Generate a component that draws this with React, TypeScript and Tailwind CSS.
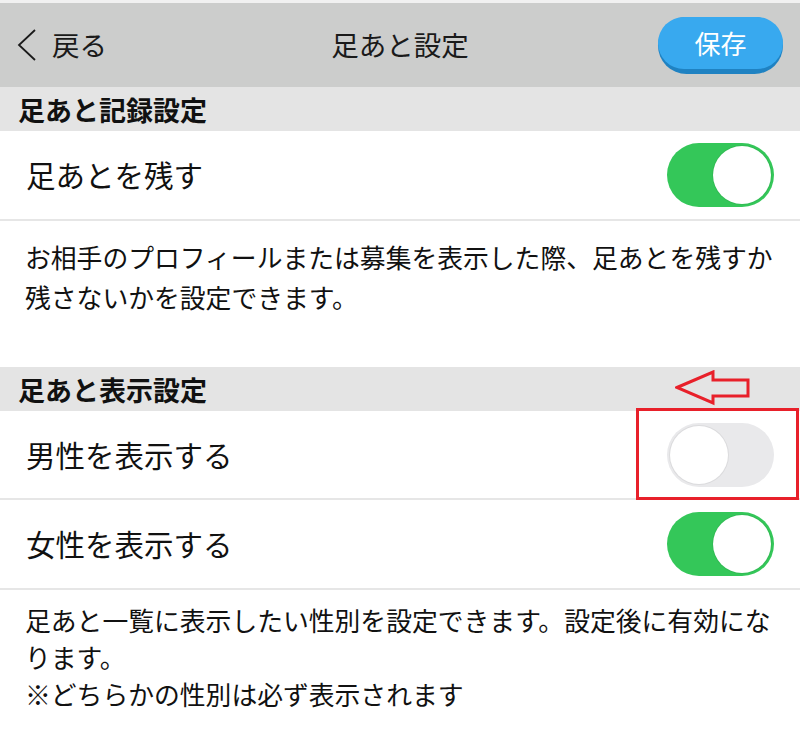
import React, { useState } from 'react';

const font = { fontFamily: '"Noto Sans CJK JP", "Noto Sans", sans-serif' };

const Toggle: React.FC<{ on: boolean; onClick: () => void }> = ({ on, onClick }) => (
  <button
    onClick={onClick}
    className={`relative h-[64px] w-[107px] rounded-full transition-colors ${on ? 'bg-[#34c759]' : 'bg-[#e9e9eb]'}`}
  >
    <span
      className={`absolute top-[3px] h-[58px] w-[58px] rounded-full bg-white shadow-[0_0_0_1px_rgba(0,0,0,0.06)] transition-all ${
        on ? 'left-[46px]' : 'left-[3px]'
      }`}
    />
  </button>
);

const SectionHeader: React.FC<{ title: string; children?: React.ReactNode }> = ({ title, children }) => (
  <div className="relative flex h-[44px] items-center bg-[#e4e4e4] pl-[18px]">
    <h2 className="text-[27px] font-bold leading-none text-[#111]">{title}</h2>
    {children}
  </div>
);

const Row: React.FC<{ label: string; on: boolean; onClick: () => void; height: string; children?: React.ReactNode }> = ({
  label,
  on,
  onClick,
  height,
  children,
}) => (
  <div className={`relative flex items-center justify-between border-b-2 border-[#e6e6e6] bg-white pl-[26px] pr-[26px] ${height}`}>
    <span className="text-[29.5px] leading-none text-[#111]">{label}</span>
    <Toggle on={on} onClick={onClick} />
    {children}
  </div>
);

export default function App() {
  const [leave, setLeave] = useState(true);
  const [male, setMale] = useState(false);
  const [female, setFemale] = useState(true);

  return (
    <div className="h-[730px] w-[800px] overflow-hidden bg-white" style={font}>
      <div className="h-[3px] bg-[#f1f1f1]" />
      <header className="grid h-[84px] grid-cols-[1fr_auto_1fr] items-center bg-[#cccdcc]">
        <button className="flex items-center gap-[15px] pl-[17px] text-[27.5px] text-[#1a1a1a]">
          <svg width="20" height="32" viewBox="0 0 20 32" fill="none">
            <path d="M18 1 L2 16 L18 31" stroke="#1a1a1a" strokeWidth="1.8" />
          </svg>
          <span className="leading-none">戻る</span>
        </button>
        <h1 className="text-[27.5px] font-normal leading-none text-[#1a1a1a]">足あと設定</h1>
        <div className="flex justify-end pr-[17px]">
          <button className="h-[57px] w-[125px] rounded-full bg-[#1f82c2] pb-[5px]">
            <span className="flex h-full w-full items-center justify-center rounded-full bg-[#38a9ef] text-[26px] leading-none text-white">
              保存
            </span>
          </button>
        </div>
      </header>

      <SectionHeader title="足あと記録設定" />
      <Row label="足あとを残す" on={leave} onClick={() => setLeave(!leave)} height="h-[90px]" />
      <p className="h-[146px] px-[25px] pt-[16px] text-[25.8px] leading-[40px] text-[#111]">
        お相手のプロフィールまたは募集を表示した際、足あとを残すか残さないかを設定できます。
      </p>

      <SectionHeader title="足あと表示設定">
        <svg className="absolute left-[675px] top-[3px]" width="76" height="36" viewBox="0 0 76 36" fill="none">
          <path d="M2 17.5 L38 2 L38 10 L73 10 L73 26 L38 26 L38 33 Z" stroke="#e8202a" strokeWidth="3" strokeLinejoin="miter" fill="none" />
        </svg>
      </SectionHeader>
      <Row label="男性を表示する" on={male} onClick={() => setMale(!male)} height="h-[89px]">
        <div className="pointer-events-none absolute left-[636px] top-[-3px] h-[92px] w-[163px] border-[3px] border-[#e8202a]" />
      </Row>
      <Row label="女性を表示する" on={female} onClick={() => setFemale(!female)} height="h-[90px]" />
      <div className="px-[25px] pt-[11px] text-[25.8px] leading-[37px] text-[#111]">
        <p>足あと一覧に表示したい性別を設定できます。設定後に有効になります。</p>
        <p>※どちらかの性別は必ず表示されます</p>
      </div>
    </div>
  );
}
